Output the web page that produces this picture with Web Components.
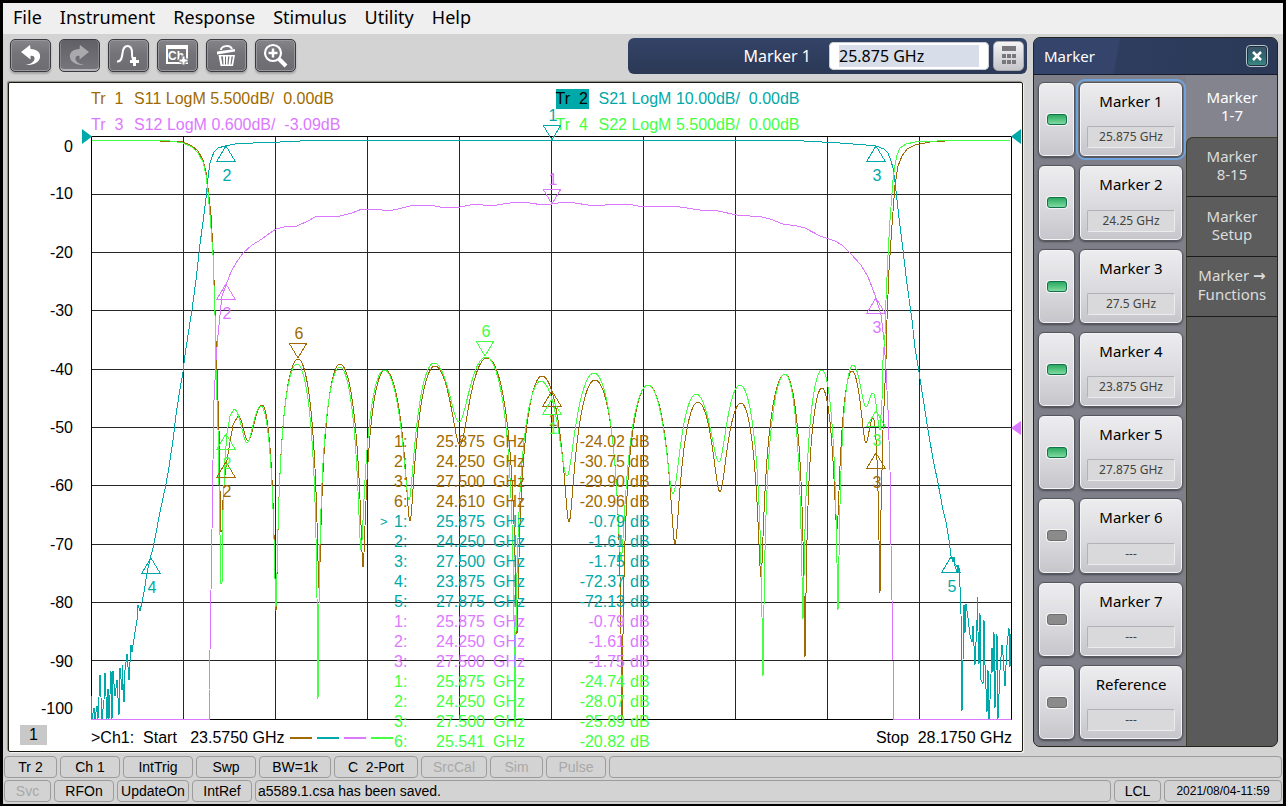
<!DOCTYPE html>
<html lang="en">
<head>
<meta charset="utf-8">
<title>Network Analyzer</title>
<style>
  html, body { margin: 0; }
  body { background: #000; font-family: "Noto Sans", sans-serif; }
</style>
</head>
<body>
<na-app></na-app>

<script>
(function () {
  "use strict";

  var COLORS = {
    s11: "#a06a00",
    s21: "#00a9a9",
    s12: "#dc78ff",
    s22: "#44ff44",
  };

  // Every element here only renders once, so a tiny helper is enough.
  function mount(host, html) {
    if (host.shadowRoot) return;
    host.attachShadow({ mode: "open" }).innerHTML = html;
  }

  // ---------------------------------------------------------------- menu bar

  class NaMenuBar extends HTMLElement {
    connectedCallback() {
      var items = ["File", "Instrument", "Response", "Stimulus", "Utility", "Help"];
      mount(this, `
        <style>
          :host { display: block; background: #efefef; }
          nav { display: flex; align-items: flex-start; gap: 18px; padding: 0 10px; height: 31px; }
          button { border: 0; padding: 0; background: none; color: #000;
            font: 18px/29px "Noto Sans", sans-serif; }
        </style>
        <nav>${items.map((t) => `<button type="button">${t}</button>`).join("")}</nav>`);
    }
  }

  // ----------------------------------------------------------------- toolbar

  var PLUS = "h3v3h3v3h-3v3h-3v-3h-3v-3h3z";
  var ARROW =
    '<path fill="currentColor" d="M11 13L20 6L20.500 10C27 10 31 14 30 18.500C29 23.500 23 26.500 15.500 26C21.500 25 25 22 24.500 19C24 17 22.500 16.500 20.500 17L20.500 20.500Z"/>';
  var ICONS = {
    undo: ARROW,
    redo: '<g transform="matrix(-1 0 0 1 41 0)">' + ARROW + "</g>",
    trace:
      '<path fill="none" stroke="currentColor" stroke-width="2" d="M9 22.500C13.500 23 14 18 14.500 14.500C15 9 16.500 7 19.500 7C23 7 24 10 24 14C24 18 24 20 26 22"/>' +
      '<path fill="currentColor" d="M25 18' + PLUS + '"/>',
    channel:
      '<path fill="currentColor" fill-rule="evenodd" d="M9 6h22v19h-22zM11 10v13h18v-13z"/>' +
      '<text x="11" y="21" font-family="Liberation Sans, sans-serif" font-size="12" font-weight="bold" fill="currentColor">Ch</text>' +
      '<path fill="currentColor" stroke="#77777c" d="M25 17' + PLUS + '"/>',
    trash:
      '<path fill="none" stroke="currentColor" stroke-width="2" d="M15 11C15 7 24 5 26 10"/>' +
      '<path fill="currentColor" d="M11 12.500L29 10V12.500L11 15.500Z"/>' +
      '<path fill="currentColor" fill-rule="evenodd" d="M12.500 16H29L27 27H14.500ZM15 17.500L16.500 25.500H17.500L17 17.500ZM19 17.500V25.500H20V17.500ZM22 17.500L21.500 25.500H22.500L23.500 17.500ZM25.500 17.500L24.500 25.500H25.500L27 17.500Z"/>',
    zoom:
      '<circle cx="18" cy="14" r="8" fill="none" stroke="currentColor" stroke-width="2.200"/>' +
      '<path stroke="currentColor" stroke-width="2.500" d="M13.500 14h9M18 9.500v9"/>' +
      '<path stroke="currentColor" stroke-width="4" d="M24 20L31 27"/>',
  };

  class NaToolButton extends HTMLElement {
    connectedCallback() {
      var off = this.hasAttribute("disabled");
      mount(this, `
        <style>
          :host { display: block; }
          button { display: block; box-sizing: border-box; width: 41px; height: 33px; padding: 0;
            border: 1px solid #3a3a40; border-radius: 5px; color: #fff;
            background: linear-gradient(#858589, #737378 45%, #6c6c72);
            box-shadow: inset 0 0 0 1px #98989c, 0 2px 2px #a4a4a4; }
          button:disabled { color: #a9a9ae; background: linear-gradient(#606066, #77777d);
            box-shadow: inset 0 -2px 0 #b4b4b8, inset 1px 0 0 #85858a, inset -1px 0 0 #85858a; }
          svg { display: block; margin: -1px; }
        </style>
        <button type="button" aria-label="${this.getAttribute("icon")}" ${off ? "disabled" : ""}>
          <svg width="41" height="33" viewBox="0 0 41 33">${ICONS[this.getAttribute("icon")]}</svg>
        </button>`);
    }
  }

  class NaEntryBar extends HTMLElement {
    connectedCallback() {
      mount(this, `
        <style>
          :host { display: block; flex: 0 0 399px; }
          div { display: flex; align-items: center; justify-content: flex-end; height: 36px;
            box-sizing: border-box; padding: 0 3px; border-radius: 6px; color: #fff;
            background: linear-gradient(#344467, #2b3856); }
          label { font-size: 16px; margin-right: 18px; }
          span { display: flex; width: 160px; height: 28px; box-sizing: border-box; padding: 3px 10px;
            background: #fff; border-radius: 5px; box-shadow: inset 0 0 0 1px #c9cbd2; }
          input { width: 100%; border: 0; padding: 0; margin: 0; background: #d7dde9; color: #000;
            font: 16px/22px "Noto Sans", sans-serif; }
          button { width: 31px; height: 30px; margin-left: 4px; padding: 0; border: 1px solid #a9a9ae;
            border-radius: 5px; background: linear-gradient(#f4f4f6, #c4c4c9); }
          svg { display: block; margin: auto; }
        </style>
        <div>
          <label for="value">Marker 1</label>
          <span><input id="value" type="text" value="25.875 GHz"></span>
          <button type="button" aria-label="Keypad">
            <svg width="20" height="22" viewBox="0 0 20 22" fill="#77777c">
              <path d="M3 1h14v5h-14z"/>
              <path d="M3 9h4v4h-4zM8 9h4v4h-4zM13 9h4v4h-4zM3 15h4v4h-4zM8 15h4v4h-4zM13 15h4v4h-4z"/>
            </svg>
          </button>
        </div>`);
    }
  }

  class NaToolbar extends HTMLElement {
    connectedCallback() {
      mount(this, `
        <style>
          :host { display: flex; align-items: flex-start; gap: 8px; padding: 5px 6px 0 7px; height: 43px; }
          na-entry-bar { margin: -1px 0 0 auto; }
        </style>
        <na-tool-button icon="undo"></na-tool-button>
        <na-tool-button icon="redo" disabled></na-tool-button>
        <na-tool-button icon="trace"></na-tool-button>
        <na-tool-button icon="channel"></na-tool-button>
        <na-tool-button icon="trash"></na-tool-button>
        <na-tool-button icon="zoom"></na-tool-button>
        <na-entry-bar></na-entry-bar>`);
    }
  }

  // ------------------------------------------------------------------- plot
  //
  // The plot works in canvas units: the graticule runs from (91, 136) to
  // (1011, 719), one division is 92 x 58.3.

  function toPath(points) {
    return "M" + points.map((p) => p[0].toFixed(1) + " " + p[1].toFixed(1)).join("L");
  }

  // Return-loss ripple between alternating peaks and nulls. Each half lobe is
  // 20log|cos| with a floor, so peaks stay round and the nulls stay sharp.
  var PX_PER_DECADE = 106;
  function ripple(extrema) {
    var out = [];
    for (var i = 0; i < extrema.length - 1; i++) {
      var a = extrema[i];
      var b = extrema[i + 1];
      var falling = b[1] > a[1];
      var peak = falling ? a : b;
      var dip = falling ? b : a;
      var floor = Math.pow(10, -(dip[1] - peak[1]) / PX_PER_DECADE);
      var n = Math.max(4, Math.round(b[0] - a[0]));
      for (var k = 0; k < n; k++) {
        var t = k / n;
        var c = Math.cos((Math.PI / 2) * (falling ? t : 1 - t));
        var level = c * c * (1 - floor) + floor;
        out.push([a[0] + (b[0] - a[0]) * t, peak[1] - PX_PER_DECADE * Math.log10(level)]);
      }
    }
    out.push(extrema[extrema.length - 1]);
    return out;
  }

  var S11 = [
    [91, 140], [160, 141], [183, 142], [192, 146], [198, 151], [203, 160], [206, 172], [208, 188],
    [211, 215], [213, 250], [215, 310], [217, 370], [219, 430], [220, 490], [221, 531],
    [222, 531], [223, 500], [225, 475], [227, 460], [230, 442], [233, 425],
  ].concat(ripple([
    [238, 416], [248, 441], [262, 405], [276, 611], [298, 359], [319, 588], [340, 364],
    [363, 567], [385, 370], [410, 521], [435, 366], [460, 445], [487, 358], [517, 634],
    [542, 376], [569, 522], [595, 380], [622, 719], [648, 385], [675, 544], [698, 402],
    [720, 492], [741, 403], [761, 577], [785, 374], [805, 657], [822, 388], [837, 529],
    [852, 371], [866, 443], [873, 418], [880, 593],
  ]), [
    [881, 510], [883, 430], [886, 360], [887, 320], [889, 270], [892, 225], [895, 185],
    [898, 166], [902, 156], [907, 149], [915, 145], [930, 142], [945, 141], [1011, 140],
  ]);

  var S22 = [
    [91, 140], [170, 141], [183, 143], [192, 147], [198, 153], [203, 162], [206, 175], [208, 192],
    [210, 215], [213, 255], [215, 315], [216, 370], [218, 430], [219, 485], [221, 583],
    [222, 583], [223, 510], [225, 460], [227, 433], [230, 416],
  ].concat(ripple([
    [234, 409], [247, 443], [261, 406], [276, 607], [297, 364], [318, 699], [340, 367],
    [361, 550], [384, 370], [409, 500], [434, 363], [459, 422], [486, 357], [515, 719],
    [541, 381], [567, 476], [594, 373], [621, 560], [648, 385], [673, 494], [696, 394],
    [719, 462], [740, 385], [763, 676], [785, 374], [803, 619], [822, 370], [838, 610],
    [853, 365], [866, 407], [873, 393], [880, 430],
  ]), [
    [882, 400], [883, 360], [885, 335], [886, 300], [888, 255], [890, 220], [893, 180],
    [895, 165], [897, 155], [900, 148], [906, 144], [915, 142], [937, 141], [1011, 140],
  ]);

  var S21 = [
    [91, 696], [92, 719], [94, 708], [95, 719], [97, 706], [98, 719], [100, 675], [102, 719],
    [104, 700], [105, 673], [107, 719], [108, 689], [109, 719], [111, 671], [112, 719], [113, 671],
    [115, 696], [117, 680], [119, 715], [120, 668], [122, 690], [122, 665], [124, 702], [125, 670],
    [127, 654], [129, 680], [131, 645], [132, 652], [135, 632], [137, 620], [138, 605], [140, 611],
    [142, 602], [144, 592], [147, 573], [150, 559], [153, 548], [156, 533], [160, 512],
    [166, 484], [169, 467], [173, 440], [176, 415], [179, 395], [183, 372], [185, 355],
    [188, 335], [192, 310], [196, 280], [200, 244], [203, 222], [206, 198], [208, 178],
    [210, 163], [212, 157], [214, 152], [218, 148], [225, 146], [235, 144], [253, 143],
    [280, 142], [300, 141], [552, 140], [703, 140], [804, 141], [840, 143], [866, 145],
    [876, 146], [884, 149], [888, 153], [891, 161], [893, 168], [895, 182], [899, 218],
    [903, 250], [907, 284], [912, 320], [915, 348], [919, 372], [923, 398], [928, 430],
    [933, 459], [938, 483], [943, 510], [946, 522], [949, 540], [951, 556], [952, 557],
    [953, 562], [954, 557], [955, 566], [957, 572], [958, 565], [958, 572], [959, 568],
    [960, 587], [961, 614], [962, 711], [963, 660], [964, 605], [965, 633], [966, 604],
    [968, 618], [970, 635], [972, 642], [973, 626], [975, 665], [977, 620], [977, 597],
    [979, 664], [980, 613], [981, 680], [983, 684], [984, 620], [985, 665], [987, 712],
    [988, 670], [989, 719], [990, 700], [992, 648], [993, 672], [994, 632], [995, 708],
    [997, 634], [998, 719], [1000, 670], [1002, 645], [1003, 655], [1005, 686], [1007, 645],
    [1009, 628], [1010, 667], [1011, 634],
  ];

  var S12 = [
    [91, 719], [209, 719], [209, 690], [210, 650], [211, 590], [212, 530], [213, 460], [214, 400],
    [216, 360], [218, 335], [220, 315], [222, 296], [226, 285], [231, 272], [236, 263], [243, 253],
    [252, 245], [262, 239], [270, 233], [276, 229], [284, 227], [297, 226], [308, 221], [317, 216],
    [340, 216], [352, 213], [362, 209], [375, 209], [388, 211], [398, 209], [410, 206], [430, 205],
    [440, 207], [460, 207], [475, 204], [490, 206], [510, 203], [520, 202], [530, 203], [543, 205],
    [552, 204], [565, 202], [575, 203], [588, 205], [605, 205], [628, 204], [643, 207], [665, 206],
    [680, 207], [700, 210], [718, 211], [737, 215], [762, 217], [770, 219], [783, 224], [797, 226],
    [805, 228], [820, 236], [835, 241], [842, 245], [850, 253], [861, 265], [868, 277], [872, 287],
    [876, 298], [881, 315], [884, 340], [886, 370], [888, 410], [890, 470], [891, 545], [892, 600],
    [893, 660], [894, 719], [1011, 719],
  ];

  // [trace, label, apex x, apex y, points up?]
  var MARKERS = [
    ["s11", "1", 552, 391, true], ["s11", "2", 226, 462, true], ["s11", "3", 876, 453, true],
    ["s11", "6", 298, 358, false],
    ["s21", "1", 552, 140, false], ["s21", "2", 226, 146, true], ["s21", "3", 876, 146, true],
    ["s21", "4", 151, 558, true], ["s21", "5", 951, 557, true],
    ["s12", "1", 552, 204, false], ["s12", "2", 226, 284, true], ["s12", "3", 876, 298, true],
    ["s22", "1", 552, 399, true], ["s22", "2", 226, 434, true], ["s22", "3", 876, 411, true],
    ["s22", "6", 485, 356, false],
  ];

  function markerSvg(m) {
    var x = m[2];
    var y = m[3];
    var base = m[4] ? y + 15 : y - 15;
    var text = m[4] ? y + 35 : y - 19;
    return `<path fill="none" stroke="${COLORS[m[0]]}" shape-rendering="crispEdges" d="M${x} ${y}L${x - 9} ${base}H${x + 9}Z"/>` +
      `<text x="${x + 1}" y="${text}" text-anchor="middle" fill="${COLORS[m[0]]}">${m[1]}</text>`;
  }

  function gridSvg() {
    var d = "";
    for (var i = 1; i < 10; i++) {
      d += `M${91.5 + i * 92} 136V719`;
      d += `M91 ${Math.floor(136 + i * 58.3) + 0.5}H1011`;
    }
    return `<path stroke="#262626" d="${d}"/><path fill="none" stroke="#000" d="M91.500 136.500H1011.500V719.500H91.500Z"/>`;
  }

  function traceSvg(name, points) {
    return `<path fill="none" stroke="${COLORS[name]}" shape-rendering="crispEdges" d="${toPath(points)}"/>`;
  }

  // [trace, marker, GHz, dB, active?]
  var READOUT = [
    ["s11", "1", "25.875", "-24.02"], ["s11", "2", "24.250", "-30.75"],
    ["s11", "3", "27.500", "-29.90"], ["s11", "6", "24.610", "-20.96"],
    ["s21", "1", "25.875", "-0.79", true], ["s21", "2", "24.250", "-1.61"],
    ["s21", "3", "27.500", "-1.75"], ["s21", "4", "23.875", "-72.37"],
    ["s21", "5", "27.875", "-72.13"],
    ["s12", "1", "25.875", "-0.79"], ["s12", "2", "24.250", "-1.61"], ["s12", "3", "27.500", "-1.75"],
    ["s22", "1", "25.875", "-24.74"], ["s22", "2", "24.250", "-28.07"],
    ["s22", "3", "27.500", "-25.89"], ["s22", "6", "25.541", "-20.82"],
  ];

  class NaMarkerReadout extends HTMLElement {
    connectedCallback() {
      mount(this, `
        <style>
          :host { display: block; }
          table { border-collapse: collapse; font: 16px/20px "Liberation Sans", Arial, sans-serif; }
          td { padding: 0; height: 20px; white-space: pre; }
          .cur { width: 14px; font-size: 13px; }
          .idx { width: 42px; }
          .freq { width: 57px; }
          .unit { width: 36px; }
          .val { width: 96px; text-align: right; }
          .db { padding-left: 5px; }
        </style>
        <table>${READOUT.map((r) => `<tr style="color:${COLORS[r[0]]}">
          <td class="cur">${r[4] ? "&gt;" : ""}</td><td class="idx">${r[1]}:</td>
          <td class="freq">${r[2]}</td><td class="unit">GHz</td>
          <td class="val">${r[3]}</td><td class="db">dB</td></tr>`).join("")}</table>`);
    }
  }

  class NaTraceTitle extends HTMLElement {
    connectedCallback() {
      mount(this, `
        <style>
          :host { display: flex; align-items: center; height: 26px; white-space: pre;
            color: ${COLORS[this.getAttribute("trace")]}; }
          b { font-weight: normal; line-height: 20px; width: 33px; margin-right: 10px; }
          :host([active]) b { background: ${COLORS.s21}; color: #000; }
        </style>
        <b>Tr  ${this.getAttribute("number")}</b><slot></slot>`);
    }
  }

  class NaChannelWindow extends HTMLElement {
    connectedCallback() {
      var levels = [0, -10, -20, -30, -40, -50, -60, -70, -80, -90, -100];
      mount(this, `
        <style>
          :host { display: grid; grid-template-columns: 82px 1fr 10px; grid-template-rows: 53px auto 1fr;
            background: #fff; border: 1px solid #1c1a10; border-radius: 2px; color: #000;
            box-shadow: -1px -1px 1px #888, 1px 1px 1px #f4f4f4;
            font: 16px/20px "Liberation Sans", Arial, sans-serif; }
          header { grid-column: 2; display: grid; grid-template-columns: 1fr 1fr; column-gap: 8px;
            grid-auto-rows: 26px; padding-top: 3px; }
          .axis { grid-column: 1; grid-row: 2; display: grid; grid-template-rows: 1fr repeat(9, 2fr) 1fr;
            align-items: center; justify-items: end; padding-right: 18px; line-height: 22px; }
          .axis :first-child { align-self: start; }
          .axis :last-child { align-self: end; }
          .plot { grid-column: 2; grid-row: 2; position: relative; }
          .plot svg { display: block; width: 100%; overflow: visible; }
          text { font: 16px "Liberation Sans", Arial, sans-serif; }
          na-marker-readout { position: absolute; left: 289px; top: 296px; }
          footer { grid-column: 1 / 3; grid-row: 3; display: grid; grid-template-columns: 82px auto auto 1fr;
            align-items: center; white-space: pre; height: 31px; padding-top: 5px; box-sizing: border-box; }
          .num { align-self: start; justify-self: start; margin-left: 11px; width: 27px; text-align: center; background: #c8c8c8; }
          .key { display: flex; gap: 5px; margin-left: 6px; }
          .key i { width: 22px; height: 2px; }
          .stop { justify-self: end; }
        </style>
        <header>
          <na-trace-title trace="s11" number="1">S11 LogM 5.500dB/  0.00dB</na-trace-title>
          <na-trace-title trace="s21" number="2" active>S21 LogM 10.00dB/  0.00dB</na-trace-title>
          <na-trace-title trace="s12" number="3">S12 LogM 0.600dB/  -3.09dB</na-trace-title>
          <na-trace-title trace="s22" number="4">S22 LogM 5.500dB/  0.00dB</na-trace-title>
        </header>
        <div class="axis">${levels.map((v) => `<span>${v}</span>`).join("")}</div>
        <div class="plot">
          <svg viewBox="91 136 921 584">
            ${gridSvg()}
            ${traceSvg("s11", S11)}
            ${traceSvg("s21", S21)}
            ${traceSvg("s12", S12)}
            ${traceSvg("s22", S22)}
            <path fill="${COLORS.s21}" d="M82 129L92 136.500L82 144ZM1021 129L1011 136.500L1021 144Z"/>
            <path fill="${COLORS.s12}" d="M1021 421L1011 428L1021 435Z"/>
            ${MARKERS.map(markerSvg).join("")}
          </svg>
          <na-marker-readout></na-marker-readout>
        </div>
        <footer>
          <span class="num">1</span>
          <span>&gt;Ch1:  Start   23.5750 GHz</span>
          <span class="key">${["s11", "s21", "s12", "s22"].map((k) => `<i style="background:${COLORS[k]}"></i>`).join("")}</span>
          <span class="stop">Stop  28.1750 GHz</span>
        </footer>`);
    }
  }

  // ---------------------------------------------------------- softkey panel

  class NaMarkerKey extends HTMLElement {
    connectedCallback() {
      var name = this.getAttribute("name");
      mount(this, `
        <style>
          :host { display: grid; grid-template-columns: 37px 1fr; gap: 4px; }
          input, button { box-sizing: border-box; margin: 0; border: 1px solid #55555c; border-radius: 6px;
            background: linear-gradient(#ededf0, #dcdce0 50%, #c5c5cb);
            box-shadow: inset 0 0 0 1px #f5f5f7, 0 1px 2px #4a4a52; }
          input { appearance: none; display: grid; place-items: center; height: 100%; }
          input::before { content: ""; width: 18px; height: 9px; border: 1px solid #6d6d6d; border-radius: 3px;
            background: #8b8b8b; box-shadow: 0 0 0 1px #f4f4f4; }
          input:checked::before { border-color: #14704a; background: linear-gradient(#2aa860, #7edb9f); }
          button { display: flex; flex-direction: column; align-items: stretch; justify-content: space-between;
            padding: 8px 7px 8px; color: #000; font: 15px/20px "Noto Sans", sans-serif; text-align: center; }
          output { display: block; box-sizing: border-box; height: 22px; border: 1px solid; font-size: 12px;
            border-color: #b2b2b6 #ececee #ececee #b2b2b6; border-radius: 2px; color: #44443c;
            background: #d9d9dc; line-height: 20px; }
          :host([selected]) button { outline: 2px solid #6fa3dd; outline-offset: 1px; }
        </style>
        <input type="checkbox" aria-label="${name} on" ${this.hasAttribute("on") ? "checked" : ""}>
        <button type="button"><span>${name}</span><output>${this.getAttribute("value")}</output></button>`);
    }
  }

  class NaSoftkeyPanel extends HTMLElement {
    connectedCallback() {
      var keys = [
        ["Marker 1", "25.875 GHz"], ["Marker 2", "24.25 GHz"], ["Marker 3", "27.5 GHz"],
        ["Marker 4", "23.875 GHz"], ["Marker 5", "27.875 GHz"],
        ["Marker 6", "---"], ["Marker 7", "---"], ["Reference", "---"],
      ];
      var tabs = ["Marker\n1-7", "Marker\n8-15", "Marker\nSetup", "Marker <b>\u2192</b>\nFunctions"];
      mount(this, `
        <style>
          :host { display: flex; flex-direction: column; box-sizing: border-box; width: 245px;
            border: 1px solid #24241c; border-radius: 7px; overflow: hidden; background: #5a5a5a; }
          header { display: flex; align-items: center; justify-content: space-between; height: 36px;
            padding: 0 9px 0 10px; color: #fff; font-size: 15px; border-bottom: 1px solid #161c2c;
            background: linear-gradient(100deg, #34446a 34%, #2e3d5e 35%, #2b3957); }
          header button { width: 22px; height: 22px; padding: 0; border: 1px solid #b6c4cf; border-radius: 4px;
            background: linear-gradient(#3d5266, #2f6a72 60%, #3e8c86); box-shadow: inset 0 0 0 1px #1f2d3c; }
          header svg { display: block; margin: auto; }
          .body { flex: 1; display: grid; grid-template-columns: 153px 1fr; }
          .keys { display: grid; grid-auto-rows: 1fr; gap: 8px; padding: 7px 3px 6px 4px;
            background: #7f7f8a; border-right: 1px solid #3c3c28; }
          /* the strip behind the first tab also shows at the second tab's round corner */
          nav { display: flex; flex-direction: column; margin-left: -1px;
            background: linear-gradient(#84848f 80px, transparent 80px); }
          nav button { box-sizing: border-box; height: 60px; border: 0; border-bottom: 1px solid #1c1c1c;
            border-left: 1px solid #3c3c28; padding: 0 0 4px; background: #5c5c5c;
            color: #dcdcdc; font: 15px/18px "Noto Sans", sans-serif; white-space: pre; }
          nav button[aria-selected="true"] { height: 62px; padding-bottom: 0; color: #fff; background: none;
            border-color: transparent; }
          nav button:nth-child(2) { border-top: 1px solid #3c3c28; border-top-left-radius: 7px; }
          b { font: bold 15px/18px "DejaVu Sans", sans-serif; }
        </style>
        <header>Marker
          <button type="button" aria-label="Close">
            <svg width="14" height="14" viewBox="0 0 14 14" stroke="#fff" stroke-width="2.500">
              <path d="M3 3L11 11M11 3L3 11"/></svg>
          </button>
        </header>
        <div class="body">
          <div class="keys">${keys.map((k, i) =>
            `<na-marker-key name="${k[0]}" value="${k[1]}" ${i < 5 ? "on" : ""} ${i === 0 ? "selected" : ""}></na-marker-key>`).join("")}
          </div>
          <nav role="tablist">${tabs.map((t, i) =>
            `<button type="button" role="tab" aria-selected="${i === 0}">${t}</button>`).join("")}</nav>
        </div>`);
    }
  }

  // -------------------------------------------------------------- status bar

  class NaStatusCell extends HTMLElement {
    connectedCallback() {
      mount(this, `
        <style>
          :host { display: block; box-sizing: border-box; height: 22px; border: 1px solid #9c9c9c;
            border-radius: 4px; text-align: center; white-space: nowrap; color: #000; line-height: 20px; }
          :host([off]) { color: #a8a8a8; }
          :host([message]) { text-align: left; padding-left: 2px; }
          :host([small]) { font-size: 12px; }
        </style>
        <slot></slot>`);
    }
  }

  class NaStatusBar extends HTMLElement {
    connectedCallback() {
      mount(this, `
        <style>
          :host { display: grid; gap: 2px; padding: 4px 1px 2px;
            font: 14px/20px "Liberation Sans", Arial, sans-serif; }
          div { display: grid; gap: 3px; }
          .measure { grid-template-columns: 53px 60px 70px 60px 72px 84px 66px 53px 60px 1fr; }
          .system { grid-template-columns: 47px 60px 72px 60px 1fr 47px 118px; }
        </style>
        <div class="measure">
          <na-status-cell>Tr 2</na-status-cell>
          <na-status-cell>Ch 1</na-status-cell>
          <na-status-cell>IntTrig</na-status-cell>
          <na-status-cell>Swp</na-status-cell>
          <na-status-cell>BW=1k</na-status-cell>
          <na-status-cell>C&nbsp; 2-Port</na-status-cell>
          <na-status-cell off>SrcCal</na-status-cell>
          <na-status-cell off>Sim</na-status-cell>
          <na-status-cell off>Pulse</na-status-cell>
          <na-status-cell></na-status-cell>
        </div>
        <div class="system">
          <na-status-cell off>Svc</na-status-cell>
          <na-status-cell>RFOn</na-status-cell>
          <na-status-cell>UpdateOn</na-status-cell>
          <na-status-cell>IntRef</na-status-cell>
          <na-status-cell message>a5589.1.csa has been saved.</na-status-cell>
          <na-status-cell>LCL</na-status-cell>
          <na-status-cell small>2021/08/04-11:59</na-status-cell>
        </div>`);
    }
  }

  // --------------------------------------------------------------------- app

  class NaApp extends HTMLElement {
    connectedCallback() {
      mount(this, `
        <style>
          :host { display: flex; flex-direction: column; box-sizing: border-box; min-height: 100vh;
            border: 3px solid #000; background: #d3d3d3; }
          main { flex: 1; display: flex; padding-right: 5px; }
          section { flex: 1; display: flex; flex-direction: column; min-width: 0; }
          na-channel-window { flex: 1; margin: 0 10px 0 5px; }
          na-softkey-panel { margin: 3px 0 5px; }
        </style>
        <na-menu-bar></na-menu-bar>
        <main>
          <section>
            <na-toolbar></na-toolbar>
            <na-channel-window></na-channel-window>
          </section>
          <na-softkey-panel></na-softkey-panel>
        </main>
        <na-status-bar></na-status-bar>`);
    }
  }

  customElements.define("na-menu-bar", NaMenuBar);
  customElements.define("na-tool-button", NaToolButton);
  customElements.define("na-entry-bar", NaEntryBar);
  customElements.define("na-toolbar", NaToolbar);
  customElements.define("na-marker-readout", NaMarkerReadout);
  customElements.define("na-trace-title", NaTraceTitle);
  customElements.define("na-channel-window", NaChannelWindow);
  customElements.define("na-marker-key", NaMarkerKey);
  customElements.define("na-softkey-panel", NaSoftkeyPanel);
  customElements.define("na-status-cell", NaStatusCell);
  customElements.define("na-status-bar", NaStatusBar);
  customElements.define("na-app", NaApp);
})();
</script>
</body>
</html>
